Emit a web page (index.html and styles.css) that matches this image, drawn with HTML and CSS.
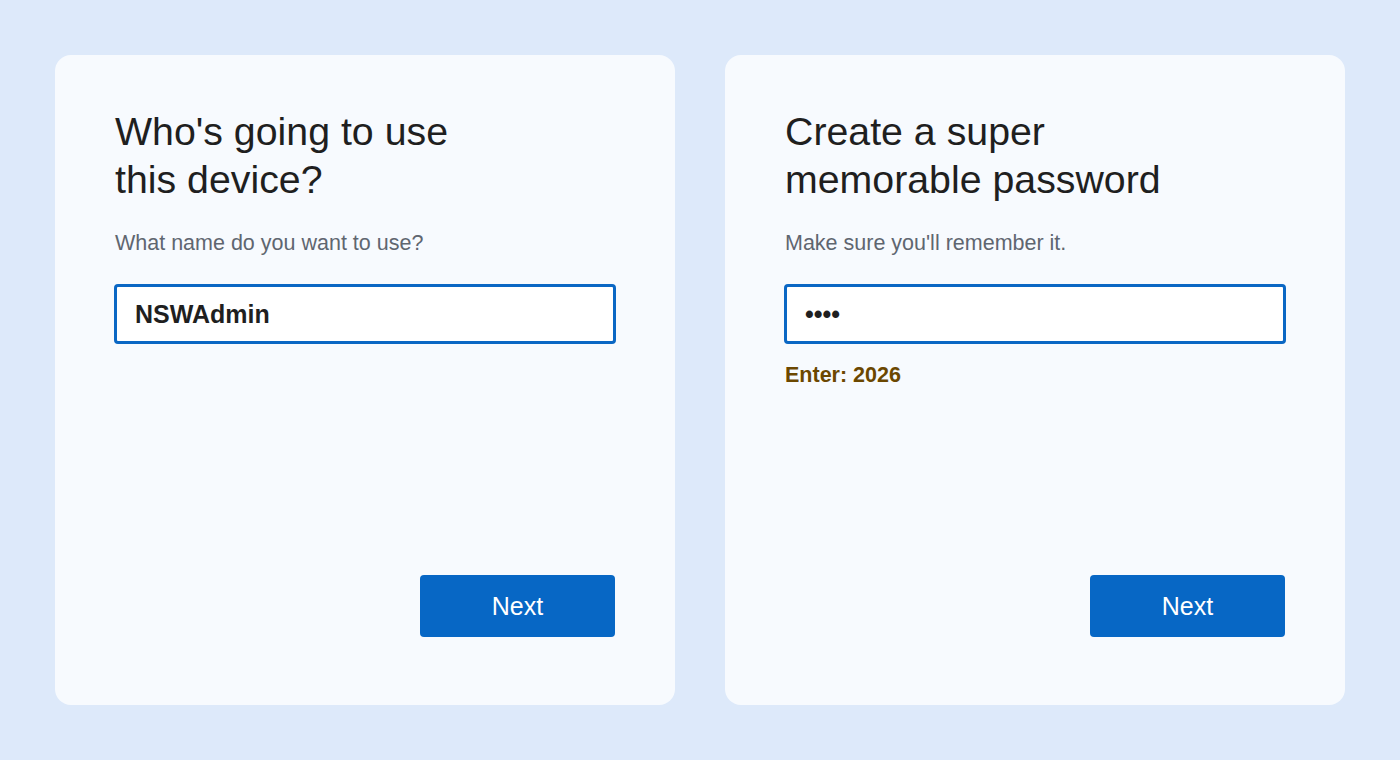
FILE: index.html
```html
<!DOCTYPE html>
<html lang="en">
<head>
<meta charset="utf-8">
<title>Setup</title>
<link rel="stylesheet" href="styles.css">
</head>
<body>
<main class="page">
  <section class="card">
    <h1 class="title">Who's going to use this device?</h1>
    <p class="subtitle">What name do you want to use?</p>
    <input class="field" type="text" value="NSWAdmin">
    <div class="actions">
      <button class="btn" type="button">Next</button>
    </div>
  </section>
  <section class="card">
    <h1 class="title">Create a super memorable password</h1>
    <p class="subtitle">Make sure you'll remember it.</p>
    <input class="field" type="password" value="2026">
    <p class="hint">Enter: 2026</p>
    <div class="actions">
      <button class="btn" type="button">Next</button>
    </div>
  </section>
</main>
</body>
</html>
```
FILE: styles.css
```css
* { box-sizing: border-box; }
html, body {
  margin: 0;
  padding: 0;
  background: #dde9fa;
  font-family: "Liberation Sans", Arial, sans-serif;
}
.page {
  display: flex;
  gap: 50px;
  padding: 55px;
}
.card {
  width: 620px;
  height: 650px;
  background: #f7fafe;
  border-radius: 16px;
  padding: 52px 60px 68px;
  display: flex;
  flex-direction: column;
}
.title {
  margin: 0;
  max-width: 400px;
  font-size: 39.3px;
  line-height: 48px;
  font-weight: 400;
  color: #1f1f1f;
}
.subtitle {
  margin: 28px 0 0;
  font-size: 21.5px;
  color: #5f6670;
}
.field {
  margin: 28px 0 0 -1px;
  width: 502px;
  height: 60px;
  border: 3px solid #0a67c4;
  border-radius: 4px;
  background: #ffffff;
  padding: 0 18px;
  font-family: "Liberation Sans", Arial, sans-serif;
  font-size: 25px;
  font-weight: 700;
  color: #1f1f1f;
  outline: none;
}
.hint {
  margin: 19px 0 0;
  font-size: 21.5px;
  font-weight: 700;
  color: #6b4700;
}
.actions {
  margin-top: auto;
  display: flex;
  justify-content: flex-end;
}
.btn {
  width: 195px;
  height: 62px;
  border: none;
  border-radius: 4px;
  background: #0767c5;
  color: #ffffff;
  font-family: "Liberation Sans", Arial, sans-serif;
  font-size: 25px;
  cursor: pointer;
}
```
